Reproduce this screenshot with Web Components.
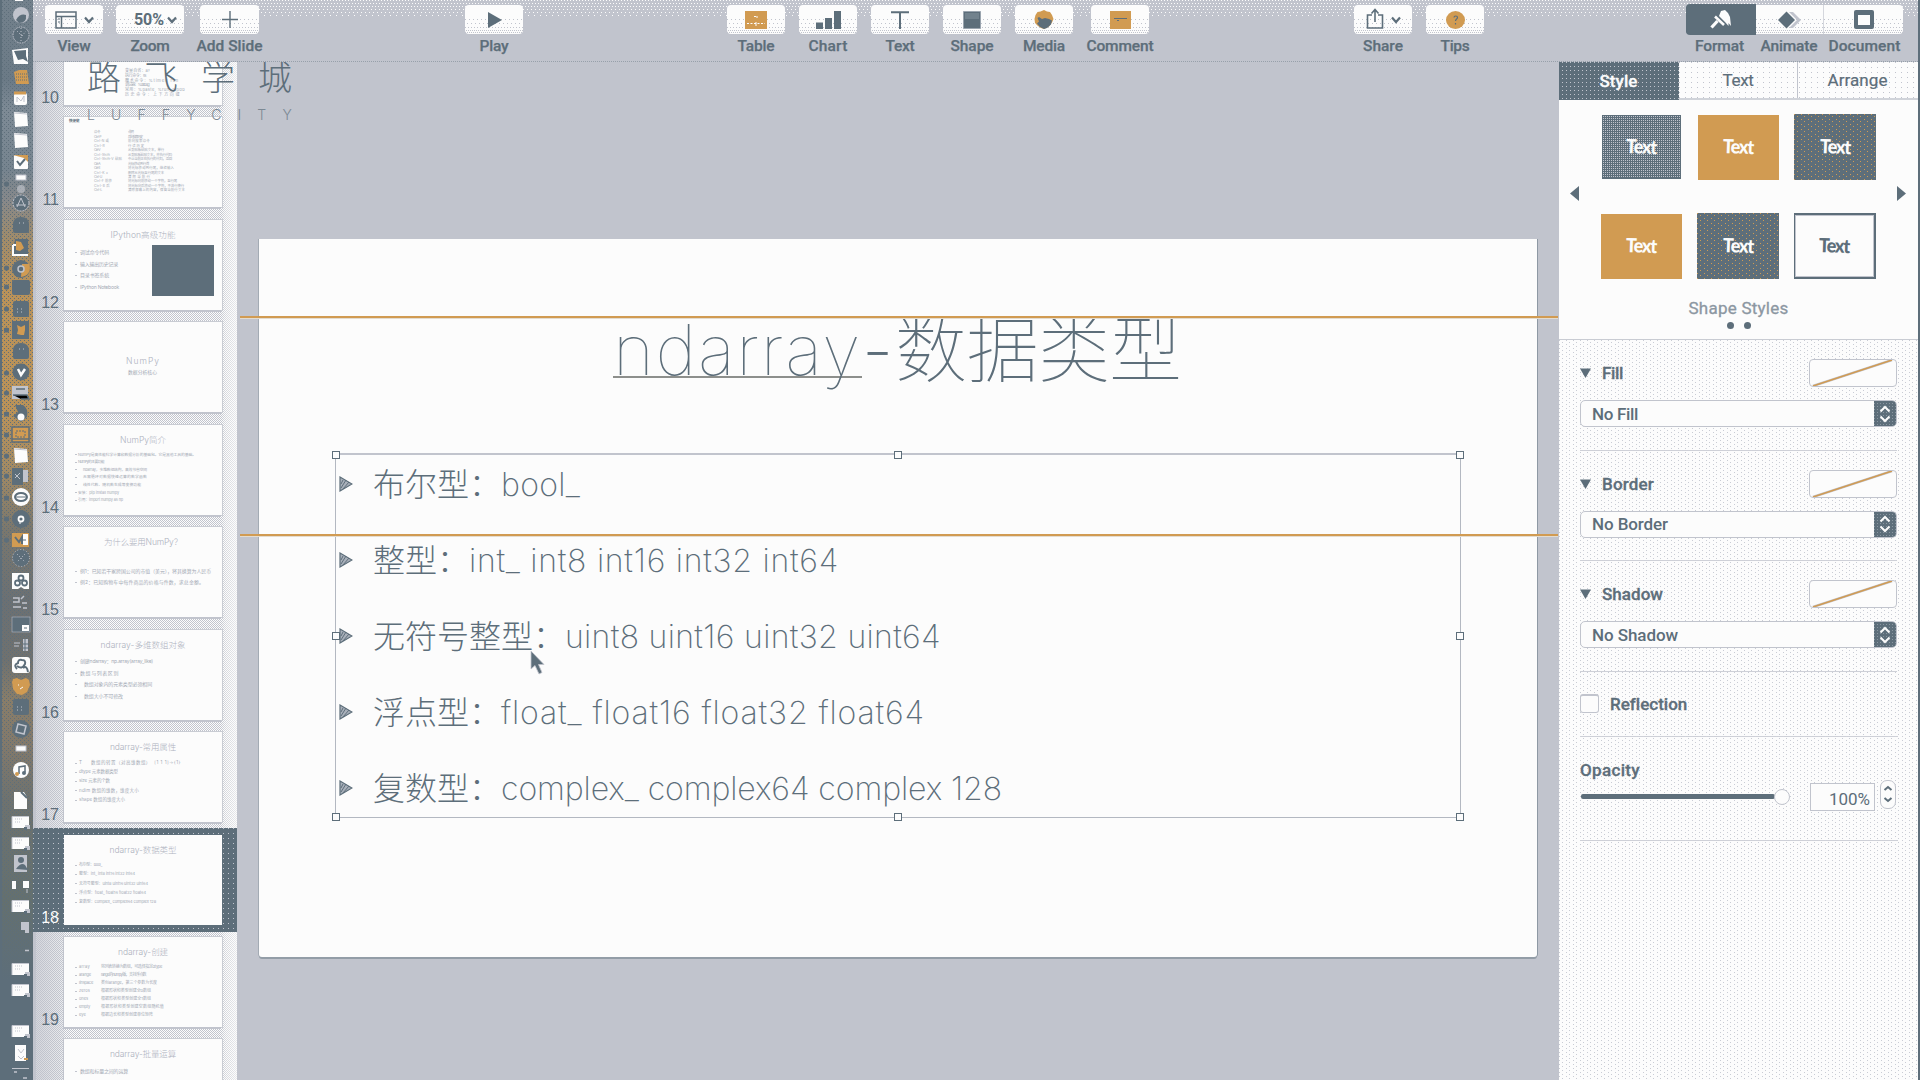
<!DOCTYPE html>
<html lang="zh">
<head>
<meta charset="utf-8">
<title>Keynote</title>
<style>
:root{--w:#fcfcfc;--g:#c1c4cd;--s:#5d6e7a;--o:#d19b52}
html,body{margin:0;height:100%;overflow:hidden}
body{width:1920px;height:1080px;background:var(--g);color:var(--s);font-family:Roboto,"Noto Sans CJK SC",sans-serif}
</style>
</head>
<body>
<keynote-app></keynote-app>
<script>
const define=(name,html,init)=>customElements.define(name,class extends HTMLElement{
  connectedCallback(){
    if(this.shadowRoot)return;
    const r=this.attachShadow({mode:'open'});
    r.innerHTML=typeof html==='function'?html(this):html;
    if(init)init(this,r);
  }
});

// Text tracked so that it fills the width given in its "w" attribute.
define('fit-text','<style>:host{display:inline-block;white-space:pre;flex:none}</style><slot></slot>',el=>{
  const w=parseFloat(el.getAttribute('w'));
  if(!w)return;
  const n=[...el.textContent].length, nat=el.getBoundingClientRect().width;
  el.style.letterSpacing=((w-nat)/n).toFixed(3)+'px';
});

const chev='<svg width="10" height="8" viewBox="0 0 10 8"><path d="M1 1.5L5 6L9 1.5" fill="none" stroke="#5d6e7a" stroke-width="2.2"/></svg>';
const icons={
  view:'<svg width="22" height="18" viewBox="0 0 22 18"><path d="M1 1h20v16H1zM1 5.5h20M6.5 5.5V17" fill="none" stroke="#5d6e7a" stroke-width="1.5"/><path d="M3 8h2M3 11h2" stroke="#5d6e7a"/></svg>'+chev,
  zoom:'<fit-text w="30">50%</fit-text>'+chev,
  add:'<svg width="16" height="17" viewBox="0 0 16 17"><path d="M8 0V17M0 8.5H16" stroke="#5d6e7a" stroke-width="1.4"/></svg>',
  play:'<svg width="15" height="16" viewBox="0 0 15 16"><path d="M1 0L15 8L1 16z" fill="#5d6e7a"/></svg>',
  table:'<svg width="22" height="18" viewBox="0 0 22 18"><path d="M0 0h22v18H0z" fill="#d19b52"/><path d="M9 5.5h3M12 5v3M2 12.5h18" stroke="#fcfcfc" stroke-dasharray="2 1.5"/><path d="M11 11v4" stroke="#fcfcfc"/></svg>',
  chart:'<svg width="25" height="18" viewBox="0 0 25 18"><path d="M0 11.5h7V18H0zM9 7h7v11H9zM18 0h7v18h-7z" fill="#5d6e7a"/></svg>',
  text:'<svg width="18" height="18" viewBox="0 0 18 18"><path d="M0 1.2h18M9 1v17" fill="none" stroke="#5d6e7a" stroke-width="2"/></svg>',
  shape:'<svg width="18" height="18" viewBox="0 0 18 18"><path d="M.5.5h17v17H.5z" fill="#5d6e7a" stroke="#9aa4ae"/><path d="M2 2h14v6H2z" fill="#80909a" opacity=".6"/></svg>',
  media:'<svg width="20" height="19" viewBox="0 0 20 19"><path d="M10 0l3 1.500 3 .500 2 3 1.500 4-1.500 3.500-3 4-3 1.500-2 1-3-1-3-2-3-3-.500-4 1-4 2-3 3-.500z" fill="#d19b52"/><path d="M3.500 8l1.500-1 3 2 3-1 4 1 3 1.500-1 4-4 3.500-3 1-4-2-3-3.500 2-2z" fill="#5d6e7a"/></svg>',
  comment:'<svg width="21" height="18" viewBox="0 0 21 18"><path d="M0 0h21v18H0z" fill="#d19b52"/><path d="M4 7.500h13M7 9.500h2" stroke="#5d6e7a" stroke-width="1.200"/></svg>',
  share:'<svg width="18" height="21" viewBox="0 0 18 21" style="margin-top:-2px"><path d="M6 7H1.500v13h15V7H12M9 14V2M5.500 5.500L9 1.500l3.500 4" fill="none" stroke="#5d6e7a" stroke-width="1.600"/></svg>'+chev,
  tips:'<svg width="19" height="18" viewBox="0 0 19 18"><ellipse cx="9.500" cy="9" rx="9.500" ry="9" fill="#d19b52"/><path d="M8 6.500c0-2 3.500-2 3.500 0c0 1.500-2 1.500-2 3.500M9.500 12v1.500" fill="none" stroke="#5d6e7a" stroke-width="1.200"/></svg>',
  format:'<svg width="22" height="19" viewBox="0 0 22 19"><path d="M11 1L15 0L18 3L20 7L21 16L18.500 13V16L15 12L9 6z" fill="#fcfcfc"/><path d="M5 6.500L14 15" stroke="#fcfcfc" stroke-width="2.600"/><path d="M7.500 11L1.500 17.500" stroke="#fcfcfc" stroke-width="3.200"/></svg>',
  animate:'<svg width="24" height="18" viewBox="0 0 24 18"><path d="M11 1h4l8 8-8 8h-4l8-8z" fill="#c1c4cd"/><path d="M8.500 0.500L17 9l-8.500 8.500L0 9z" fill="#5d6e7a"/></svg>',
  document:'<svg width="20" height="19" viewBox="0 0 20 19"><rect width="20" height="19" rx="2" fill="#5d6e7a"/><path d="M4 5h12v10H4z" fill="#fcfcfc"/></svg>'
};

define('tool-button',el=>`<style>
:host{display:flex;flex-direction:column;align-items:center;width:${el.getAttribute('bw')||58}px;margin-left:${el.getAttribute('ml')||0}px;flex:none}
.b{box-sizing:border-box;width:100%;height:29px;display:flex;align-items:center;justify-content:center;gap:7px;border-radius:4px;font:700 16px Roboto,sans-serif;
 background:conic-gradient(at 1px 1px,transparent 75%,#c1c4cd 0) 0 14px/4px 4px repeat-x,conic-gradient(at 1px 1px,transparent 75%,#c1c4cd 0) 2px 18px/4px 4px repeat-x,conic-gradient(at 1px 1px,transparent 75%,#c1c4cd 0) 0 22px/3px 3px repeat-x,conic-gradient(at 1px 1px,transparent 75%,#c1c4cd 0) 1px 25px/2px 2px repeat-x,conic-gradient(at 1px 1px,transparent 75%,#c1c4cd 0) 0 27px/2px 2px repeat-x,#fcfcfc}
:host([seg]) .b{border-radius:0;border-right:1px solid #d5d7dd}
:host([seg=last]) .b{border-radius:0 4px 4px 0;border-right:0}
:host([seg=on]) .b{background:#5d6e7a;border-radius:4px 0 0 4px;border:0;box-shadow:0 1px #5d6e7a,0 -1px #5d6e7a}
.l{font:500 15.5px/20px Roboto,sans-serif;margin-top:2px;white-space:nowrap;-webkit-text-stroke:.25px #5d6e7a}
svg{display:block;flex:none}
</style><div class="b" style="${el.getAttribute('icon')=='zoom'?'gap:3px;padding-left:11px':''}">${icons[el.getAttribute('icon')]}</div><div class="l" style="margin-left:${2*(el.getAttribute('lx')||0)}px"><fit-text w="${el.getAttribute('lw')}">${el.getAttribute('label')}</fit-text></div>`);

define('app-toolbar',`<style>
:host{display:flex;height:62px;padding:5px 0 0 12px;box-sizing:border-box;width:1885px;border-bottom:1px dotted #97a0aa;
background:conic-gradient(at 1px 1px,transparent 75%,#fcfcfc 0) 0 0/3px 3px repeat-x,conic-gradient(at 1px 1px,transparent 75%,#fcfcfc 0) 1px 3px/3px 3px repeat-x,conic-gradient(at 1px 1px,transparent 75%,#fcfcfc 0) 0 6px/3px 3px repeat-x,conic-gradient(at 1px 1px,transparent 75%,#fcfcfc 0) 2px 9px/4px 3px repeat-x,conic-gradient(at 1px 1px,transparent 75%,#fcfcfc 0) 0 12px/4px 3px repeat-x,conic-gradient(at 1px 1px,transparent 75%,#fcfcfc 0) 3px 15px/6px 3px repeat-x,#c1c4cd}
</style>
<tool-button icon="view" label="View" lw="33"></tool-button>
<tool-button icon="zoom" label="Zoom" lw="39" bw="68" ml="13"></tool-button>
<tool-button icon="add" label="Add Slide" lw="66" bw="59" ml="16"></tool-button>
<tool-button icon="play" label="Play" lw="29" ml="206"></tool-button>
<tool-button icon="table" label="Table" lw="37" ml="204"></tool-button>
<tool-button icon="chart" label="Chart" lw="39" ml="14"></tool-button>
<tool-button icon="text" label="Text" lw="29" ml="14"></tool-button>
<tool-button icon="shape" label="Shape" lw="43" ml="14"></tool-button>
<tool-button icon="media" label="Media" lw="42" ml="14"></tool-button>
<tool-button icon="comment" label="Comment" lw="67" ml="18"></tool-button>
<tool-button icon="share" label="Share" lw="40" ml="205"></tool-button>
<tool-button icon="tips" label="Tips" lw="29" ml="14"></tool-button>
<tool-button icon="format" label="Format" lw="49" bw="70" ml="202" seg="on" lx="-1.5"></tool-button>
<tool-button icon="animate" label="Animate" lw="57" bw="68" seg="mid" lx="-1"></tool-button>
<tool-button icon="document" label="Document" lw="72" bw="79" seg="last" lx="1"></tool-button>`);

// Dock: [kind, y]
const dock=[['ball',15],['compass',35],['face',56],['book',77],['cal',98],['page',119],['page',140],['maps',162],['mini',178],['gear',189],['astore',203],['bubble',225],['photo',247],['chrome',269],['dark',287],['dark2',309],['m',330],['bubble',351],['v',372],['lines',393],['peng',413],['key',434],['page',455],['xl',476],['disc',497],['eye',519],['doc2',540],['globe',558],['clover',581],['bits',602],['dlock',624],['bits2',645],['swirl',665],['orange',686],['dark2',707],['box',729],['mini',749],['music',770],['file',800],['win',822],['win',843],['pic',863],['split',885],['win',906],['dim',927],['win',969],['win',990],['win',1031],['file2',1053]];
const W='#fcfcfc',G='#c1c4cd',S='#5d6e7a',O='#d19b52';
const ic={
 ball:`<circle r="8" fill="${G}"/><path d="M-5 5Q-1-2 5 0Q6 8-2 8z" fill="${S}"/>`,
 compass:`<circle r="8" fill="${S}" stroke="${G}" stroke-dasharray="1.500 1"/><path d="M-4-4L1 1M1 1L5-4M0-7V7" stroke="${G}" stroke-dasharray="1 2"/>`,
 face:`<path d="M-9-6L7-8V8H-7z" fill="${W}"/><path d="M-7-5L5-6V0L7 6L2 3L-3 4z" fill="${S}"/>`,
 book:`<path d="M-7-5L-2-7H6L8 7H-5z" fill="${O}"/><path d="M-5-3H6M-5 0H6M-5 3H6" stroke="${S}" stroke-dasharray="1 1"/>`,
 cal:`<rect x="-7" y="-5" width="13" height="12" rx="2" fill="${W}"/><path d="M-7-5H5" stroke="${O}" stroke-width="3"/><path d="M-4 4V-1L0 3L3-2V4" fill="none" stroke="${G}"/>`,
 page:`<path d="M-7-7L6-6L7 7L-6 8z" fill="${W}"/><path d="M-7-6L6-5" stroke="${G}"/>`,
 maps:`<rect x="-7" y="-7" width="14" height="14" rx="1" fill="${W}"/><path d="M-8-7H7V0L3-4z" fill="${O}"/><path d="M-4-1L-1 3L4-3" stroke="${S}" stroke-width="2" fill="none"/>`,
 mini:`<rect x="-5" y="-3" width="10" height="5" fill="${W}" stroke="${G}"/>`,
 gear:`<circle r="4" fill="${G}" opacity=".65"/>`,
 astore:`<circle r="8" fill="${S}" stroke="${G}" stroke-dasharray="2 1"/><path d="M-4 4L0-5L4 4M-5 2H5" stroke="${G}" fill="none"/>`,
 bubble:`<path d="M-8 0Q-8-8 0-8T8 0V6Q8 8 6 8H-6Q-8 8-8 6z" fill="${S}"/><path d="M-2-2h1M2-2h1" stroke="${G}"/>`,
 photo:`<path d="M-6-8H7V8H-8z" fill="${S}"/><path d="M-8-2H-4M-8-2V8H7" fill="none" stroke="${W}" stroke-width="2"/><path d="M-5-6L0-5L3 1L-1 4L-5 3z" fill="${O}"/>`,
 chrome:`<circle r="9" fill="${S}"/><path d="M0 8A9 9 0 0 0 8-5H1z" fill="${O}"/><circle r="3" fill="${S}" stroke="${G}" stroke-width="1.500"/>`,
 dark:`<rect x="-9" y="-7" width="18" height="15" rx="2" fill="${S}"/>`,
 dark2:`<rect x="-8" y="-8" width="16" height="16" rx="2" fill="${S}"/><path d="M-4 0h8M-4 3h8" stroke="${G}" stroke-dasharray="1 3"/>`,
 m:`<rect x="-9" y="-9" width="17" height="18" fill="${S}"/><path d="M-4-5L0-3L4-5V0L3 5H0L-4 4L-3 0z" fill="${O}"/>`,
 v:`<circle r="8.500" fill="${S}"/><path d="M-3-3L0 3L4-3" fill="none" stroke="${W}" stroke-width="2.500"/>`,
 lines:`<rect x="-9" y="-7" width="16" height="13" fill="${G}"/><path d="M-8 2H6L8 6H0M-5-4H4" stroke="${S}" stroke-width="1.500"/>`,
 peng:`<path d="M-6-8H2Q8-4 6 4L0 9L-8 3L-3-1z" fill="${S}"/><circle cx="0" cy="4" r="3.500" fill="${W}"/>`,
 key:`<rect x="-9" y="-7" width="17" height="15" fill="${O}" stroke="${S}" stroke-width="1.500"/><path d="M-5-3H4V3H-5z" fill="none" stroke="${S}" stroke-dasharray="2 1"/><path d="M-9 5H8" stroke="${S}" stroke-width="1.500"/>`,
 xl:`<path d="M-9-8H2V9H-9z" fill="${S}"/><path d="M2-6H7V6H2" fill="${G}"/><path d="M-6 2L-1-3M-6-2L-1 3" stroke="${G}"/>`,
 disc:`<circle r="9" fill="${W}"/><ellipse rx="6" ry="4" fill="none" stroke="${S}" stroke-width="2"/><path d="M-6 0H6" stroke="${S}"/>`,
 eye:`<circle r="9" fill="${S}"/><circle r="2.500" fill="none" stroke="${W}" stroke-width="1.800"/><path d="M-1 2V5" stroke="${W}"/>`,
 doc2:`<rect x="-9" y="-7" width="17" height="14" fill="${O}"/><path d="M-6-3L-2 2L1-3V4" stroke="${S}" fill="none" stroke-width="2"/><path d="M2-6H7V5H2z" fill="${W}"/><path d="M2 0H5" stroke="${S}"/>`,
 globe:`<circle r="8.500" fill="${S}" stroke="${G}" stroke-dasharray="1 2"/><path d="M-4-4L4 4M4-4L-4 4" stroke="${G}" stroke-dasharray="1 2"/>`,
 clover:`<path d="M-9-8H8V8H3L0 6L-3 8H-9z" fill="${W}"/><g fill="none" stroke="${S}" stroke-width="1.800"><circle cy="-3" r="2.500"/><circle cx="-3.500" cy="2" r="2.500"/><circle cx="3.500" cy="2" r="2.500"/></g>`,
 bits:`<path d="M-8-4H-2V0H-8M0-3L3-6M-8 5H0M1 1h5M2 6h4" stroke="${G}" stroke-width="1.500" fill="none"/>`,
 dlock:`<rect x="-9" y="-7" width="18" height="15" fill="${S}" stroke="${G}" stroke-width=".5"/><rect x="1" y="1" width="7" height="6" fill="${W}"/><path d="M3 4h3" stroke="${S}"/>`,
 bits2:`<path d="M2-6H7V6H2z" fill="${G}"/><path d="M2-1H8M2 3H8M4-6V6" stroke="${S}"/><path d="M-7-2h6M-7 1h5" stroke="${G}"/>`,
 swirl:`<rect x="-9" y="-8" width="18" height="16" rx="3" fill="${W}"/><path d="M-4 4Q-8 0-3-2Q-3-6 1-5Q5-5 4-1Q1 5-4 1M2 3Q6 0 7 7" fill="none" stroke="${S}" stroke-width="2"/>`,
 orange:`<path d="M-9-4L-8-7L-4-8L0-6L5-8L8-6L9-1L6 6L1 9L-4 8L-8 3z" fill="${O}"/><path d="M-3-1h1M-1 3L2 1" stroke="${W}"/>`,
 box:`<circle r="9" fill="${S}"/><path d="M-3-5L5-3L3 5L-5 3z" fill="none" stroke="${G}" stroke-width="1.500"/>`,
 music:`<circle r="8" fill="${W}"/><path d="M-2 4V-3L4-4V2" fill="none" stroke="${S}" stroke-width="1.500"/><circle cx="-4" cy="4" r="2" fill="${O}"/><circle cx="3" cy="3" r="2" fill="${S}"/>`,
 file:`<path d="M-7-8H3L6-3V9H-7z" fill="${W}"/><path d="M0-8L6-2" stroke="${S}" stroke-width="2"/>`,
 win:`<path d="M-9-5H8V6H-9z" fill="${W}"/><path d="M-9 6V-5.500H8" stroke="${G}" fill="none"/><path d="M-6-3H2M-6 0H0" stroke="${G}" stroke-dasharray="1 1"/><path d="M4 3H9V7H4z" fill="${G}"/><path d="M3 5H6V8H3z" fill="${S}"/>`,
 pic:`<rect x="-7" y="-8" width="13" height="17" fill="${G}"/><circle cy="-3" r="3" fill="${S}"/><path d="M-5 6Q0-1 4 2L7 7z" fill="${S}"/>`,
 split:`<path d="M-9-4H-5V4H-9zM2-4H8V3H2z" fill="${W}"/><path d="M6 4V8" stroke="${G}"/>`,
 dim:`<path d="M0-5H8V6H4V3H0z" fill="${G}"/>`,
 file2:`<path d="M-6-8H5V8H-6z" fill="${W}"/><path d="M-3-4L0 0L3-4M-3 3L0 6L3 3" stroke="${G}" fill="none"/><path d="M3 6h4" stroke="${O}" stroke-width="2"/>`
};
define('app-dock',`<style>
:host{display:block;width:33px;height:1080px;flex:none;background:linear-gradient(90deg,#5d6e7a 2px,transparent 2px),
linear-gradient(180deg,#73818c,#6b7a86 80px,#7d8a95 110px,#76848f 170px,#86888a 200px,#a08b69 240px,#b99259 290px,#b99259 410px,#a28a64 470px,#7a776d 530px,#6b7073 600px,#6f716f 660px,#887d69 700px,#82796b 745px,#6e726f 800px,#64706f 900px,#5d6e7a 980px)}
svg{display:block}
</style><svg width="33" height="1080" viewBox="0 0 33 1080">
<defs><pattern id="d" width="4" height="4" patternUnits="userSpaceOnUse"><path d="M0 0h1v1H0zM2 2h1v1H2z" fill="#5d6e7a"/></pattern></defs>
<rect x="2" width="31" height="960" fill="url(#d)"/><path d="M15 0h8" stroke="#fcfcfc" stroke-width="2"/>
${dock.map(([k,y])=>`<g transform="translate(21 ${y})">${ic[k]}</g>`).join('')}
${[184,268,287,309,330,373,393,414,435,456,476,498,519,540].map(y=>`<circle cx="6.500" cy="${y}" r="2.600" fill="${S}"/>`).join('')}
<path d="M12 1068.500H29" stroke="${G}"/><path d="M14 1072h3M23 1078h4M25 950.500h4" stroke="${G}" stroke-width="1.500"/></svg>`);

// Slide thumbnails. Rows: [text, width, x, second column text, width, x]
const thumbs=[
 {n:10,first:56,step:4.8,fs:4,rows:[['变量自省：a?',25,61],['执行命令：!ls',21,61],['魔术命令：%timeit run',54,61],['调试器：%debug',24,61],['常用：%paste, %run, %pdb',60,61],['历史命令：上下方向键',56,61]]},
 {n:11,small:'快捷键',first:15.6,step:4.47,fs:3.4,rows:[['命令',6,30,'说明',5,64],['Ctrl-P',7,30,'后向搜索历史',14,64],['Ctrl-N 或',15,30,'前向搜索命令',22,64],['Ctrl-R',11,30,'行读历史',17,64],['Ctrl-V',6,30,'从剪贴板粘贴文本，单行',36,64],['Ctrl-Shift',16,30,'从剪贴板粘贴文本，并执行代码',44,64],['Ctrl-Shift-V 粘贴',28,30,'中止当前正在执行的代码，返回',44,64],['Ctrl-A',6,30,'光标移动到行首',21,64],['Ctrl-E',6,30,'将光标移动到行尾，继续输入',46,64],['Ctrl-K x',14,30,'删除从光标至行尾的文本',36,64],['Ctrl-U',8,30,'清除当前行',23,64],['Ctrl-F 前移',18,30,'将光标向前移动一个字符，至行尾',49,64],['Ctrl-B 后',16,30,'将光标向后移动一个字符，不进行换行',56,64],['Ctrl-L',8,30,'清除屏幕上的内容，保留当前行文本',57,64]]},
 {n:12,title:'IPython高级功能',tw:65,first:32.7,step:11.5,fs:5,box:1,rows:[['调试命令代码',29,16],['输入输出历史记录',38,16],['目录书签系统',29,16],['IPython Notebook',39,16]]},
 {n:13,title:'NumPy',tw:34,tt:39,first:50,step:5,fs:4.8,rows:[['数据分析核心',29,64]],nb:1},
 {n:14,title:'NumPy简介',tw:46,first:30,step:7.55,fs:3.8,rows:[['NumPy是高性能科学计算和数据分析的基础包。它是其他工具的基础。',118,14],['NumPy的主要功能',26,14],['ndarray，多维数组结构，高效节省空间',64,19],['无需循环对数据快速运算的数学函数',64,19],['线性代数、随机数生成等变换功能',58,19],['安装：pip install numpy',41,14],['引用：import numpy as np',45,14]]},
 {n:15,title:'为什么要用NumPy？',tw:78,first:44,step:11.5,fs:4.9,rows:[['例1：已知若干家跨国公司的市值（美元），将其换算为人民币',131,16],['例2：已知购物车中每件商品的价格与件数，求总金额。',124,16]]},
 {n:16,title:'ndarray-多维数组对象',tw:85,first:32,step:11.5,fs:5,rows:[['创建ndarray：np.array(array_like)',73,16],['数组与列表区别',39,16],['数组对象内的元素类型必须相同',68,20],['数组大小不可修改',39,20]]},
 {n:17,title:'ndarray-常用属性',tw:66,first:31,step:9.3,fs:4.5,rows:[['T',2,15,'数组的转置（对高维数组）  [1 1 1]→{1}',90,27],['dtype 元素数据类型',39,15],['size 元素的个数',31,15],['ndim 数组的维数，维度大小',60,15],['shape 数组的维度大小',46,15]]},
 {n:18,title:'ndarray-数据类型',tw:67,first:30.7,step:9.3,fs:4,sel:1,rows:[['布尔型：bool_',23,15],['整型：int_ int8 int16 int32 int64',56,15],['无符号整型：uint8 uint16 uint32 uint64',69,15],['浮点型：float_ float16 float32 float64',67,15],['复数型：complex_ complex64 complex 128',77,15]]},
 {n:19,title:'ndarray-创建',tw:50,first:30.4,step:7.97,fs:4,rows:[['array',11,15,'将列表转换为数组，可选择指定dtype',61,37],['arange',12,15,'range的numpy版，支持浮点数',45,37],['linspace',14,15,'类似arange，第三个参数为长度',56,37],['zeros',11,15,'根据形状和类型创建全0数组',50,37],['ones',9,15,'根据形状和类型创建全1数组',50,37],['empty',11,15,'根据形状和类型创建空数组随机值',63,37],['eye',7,15,'根据边长和类型创建单位矩阵',52,37]]},
 {n:20,title:'ndarray-批量运算',tw:66,first:32,step:11.5,fs:5,rows:[['数组和标量之间的运算',48,16]]}
];
define('slide-thumb',el=>{const t=thumbs[+el.getAttribute('i')];return `<style>
:host{display:flex;height:102.45px;box-sizing:border-box;padding:7px 0 0 0;flex:none;align-items:flex-start}
:host([sel]){background:conic-gradient(at 1px 1px,transparent 75%,#c1c4cd 0) 0 0/5px 5px,#5d6e7a;color:#fcfcfc;height:104.45px;margin-bottom:-2px}
.n{width:26px;height:93px;display:flex;align-items:flex-end;justify-content:flex-end;font:400 16px/20px "Liberation Sans",sans-serif;box-sizing:border-box}
.t{width:158px;height:90px;margin-left:5px;background:#fcfcfc;box-shadow:-1px 0 #c1c4cd,-1px 2px #c1c4cd,0 0 0 1px #c9ccd3;overflow:hidden;display:grid;flex:none;color:#a3a9b4;font-family:Inter,"Noto Sans CJK SC",sans-serif}
:host([sel]) .t{box-shadow:none}
.t>*{grid-area:1/1}
.h{text-align:center;font-weight:300;font-size:8.5px;line-height:10px;color:#acb1bc}
.r{display:flex;align-items:center;white-space:pre;height:${t.step}px;font-size:${t.fs}px;line-height:1}
.r i{width:2px;height:1px;background:#c1c4cd;margin-left:11px;margin-right:-13px;flex:none}
.pic{width:62px;height:51px;margin:25px 0 0 88px;background:#5d6e7a}
</style><div class="n">${t.n<20?t.n:''}</div><div class="t">
${t.title?`<div class="h" style="margin-top:${(t.tt||15)-5}px"><fit-text w="${t.tw}">${t.title}</fit-text></div>`:''}
${t.small?`<div style="font-size:3.500px;line-height:5px;margin:2px 0 0 5px;font-weight:700;color:#5d6e7a">${t.small}</div>`:''}
<div style="padding-top:${t.first-t.step/2}px">${t.rows.map(r=>`<div class="r">${t.nb||t.n<12?'':`<i></i>`}<fit-text w="${r[1]}" style="margin-left:${r[2]}px">${r[0]}</fit-text>${r[3]?`<fit-text w="${r[4]}" style="margin-left:${r[5]-r[2]-r[1]}px">${r[3]}</fit-text>`:''}</div>`).join('')}</div>
${t.box?'<div class="pic"></div>':''}</div>`});

define('slide-navigator',`<style>
:host{display:block;width:204px;height:1018px;overflow:hidden;flex:none;
background:linear-gradient(90deg,#c1c4cd 3px,transparent 3px),linear-gradient(90deg,#c1c4cdb0 3px,#c1c4cd40 31px,transparent 32px,transparent 188px,#fcfcfc55 192px,#fcfcfcaa),repeating-conic-gradient(#c1c4cd 0 25%,#fcfcfc 0 50%) 0 0/2px 2px}
.l{display:flex;flex-direction:column;margin-top:-54px}
</style><div class="l">${thumbs.map((t,i)=>`<slide-thumb i="${i}"${t.sel?' sel':''}></slide-thumb>`).join('')}</div>`);

define('bullet-line',el=>`<style>
:host{display:flex;align-items:center;height:76px;font:200 32px/40px Inter,"Noto Sans CJK SC",sans-serif}
svg{margin-right:20px;flex:none}
.c{font-family:"Noto Sans CJK SC";font-weight:300;margin-top:-4px}
.e{margin-top:2px}
</style><svg width="14" height="16" viewBox="0 0 14 16"><path d="M1 1v14L13 8z" fill="#a9b0ba" stroke="#5d6e7a" stroke-width="1.200"/><path d="M2 12L7 4M4 13L10 6M2 8L4 4" stroke="#5d6e7a"/></svg><fit-text class="c" w="${el.getAttribute('cw')}">${el.getAttribute('zh')}</fit-text><fit-text class="e" w="${el.getAttribute('lw')}">${el.getAttribute('en')}</fit-text>`);

define('slide-canvas',`<style>
:host{display:block;position:relative;width:1322px;height:1018px;flex:none;background:#c1c4cd;overflow:hidden}
.slide{margin:177px 0 0 22px;width:1278px;height:718px;background:#fcfcfc;border-radius:0 0 3px 3px;box-shadow:-1px 0 #a3abb4,1px 0 #8e99a4,0 2px #939da7;box-sizing:border-box;padding:64px 77px 0 76px;display:flex;flex-direction:column}
.title{display:flex;align-items:flex-end;justify-content:center;height:94px;font:100 70px/94px Inter,"Noto Sans CJK SC",sans-serif;white-space:nowrap;margin-left:-1px}
.title .u{text-decoration:underline;text-decoration-thickness:2px;text-underline-offset:1px;text-decoration-skip-ink:none;text-decoration-color:#8d8f8c}
.title .d{font-weight:200}
.title .c{font:100 72px/94px "Noto Sans CJK SC",sans-serif;margin-bottom:5px}
.body{position:relative;box-sizing:border-box;width:1126px;height:365px;margin-top:56px;border:1px solid #b3b8c1;border-top:2px solid #c1c4cd;padding-left:3px;display:flex;flex-direction:column;flex:none}
.lines{margin-top:-9px}
.k{position:absolute;width:8px;height:8px;box-sizing:border-box;border:1.500px solid #5d6e7a;background:#fcfcfc;margin:-4px}
.guide{position:absolute;left:3px;width:1318px;height:2px;background:#d19b52;box-shadow:0 1px #e4dccf}
.cur{position:absolute;left:293px;top:589px}
</style>
<div class="slide"><div class="title"><fit-text class="u" w="249">ndarray</fit-text><fit-text class="d" w="33">-</fit-text><fit-text class="c" w="286">数据类型</fit-text></div>
<div class="body"><div class="lines">
<bullet-line cw="128" zh="布尔型：" en="bool_" lw="79"></bullet-line>
<bullet-line cw="96" zh="整型：" en="int_ int8 int16 int32 int64" lw="370"></bullet-line>
<bullet-line cw="192" zh="无符号整型：" en="uint8 uint16 uint32 uint64" lw="376"></bullet-line>
<bullet-line cw="128" zh="浮点型：" en="float_ float16 float32 float64" lw="424"></bullet-line>
<bullet-line cw="128" zh="复数型：" en="complex_ complex64 complex 128" lw="501"></bullet-line></div>
${[0,50,100].map(x=>[0,50,100].map(y=>x==50&&y==50?'':`<span class="k" style="left:${x}%;top:${y}%"></span>`).join('')).join('')}
</div></div>
<div class="guide" style="top:253.500px"></div><div class="guide" style="top:471.500px"></div>
<svg class="cur" width="15" height="24" viewBox="0 0 15 24"><path d="M1 0V18L5 14.500L9 23L12 21.500L8.500 13.500H14z" fill="#5d6e7a" stroke="#c1c4cd" stroke-width=".8"/></svg>`);

define('shape-swatch',el=>`<style>
:host{display:flex;align-items:center;justify-content:center;box-sizing:border-box;color:#fcfcfc;font:900 18px/20px Lato,sans-serif;flex:none}
:host([k=a]){width:79px;height:64px;background:conic-gradient(at 1px 1px,transparent 75%,#c1c4cd 0) 0 0/2px 2px,#5d6e7a;border:1px solid #5d6e7a}
:host([k=o]){width:81px;height:65px;background:#d19b52}
:host([k=d]){width:82px;height:66px;background:conic-gradient(at 1px 1px,transparent 75%,#d19b52 0) 0 0/7px 5px,conic-gradient(at 1px 1px,transparent 75%,#d19b52 0) 3px 2px/7px 5px,#5d6e7a}
:host([k=w]){width:82px;height:66px;border:2px solid #5d6e7a;border-left-width:1px;background:#fcfcfc;color:#5d6e7a;box-shadow:inset 0 0 0 1px #c1c4cd}
</style><fit-text w="31" style="transform:translateY(-1px) scaleY(1.080) rotate(2deg)">Text</fit-text>`);

define('style-section',el=>`<style>
:host{display:block;box-sizing:border-box;height:110.500px;padding-top:19px;border-bottom:1px solid #ced0d7;margin:0 21px 0 21px}
.r{display:flex;align-items:center;height:28px}
.r svg{flex:none}
b{font:500 17px/20px Roboto,sans-serif;-webkit-text-stroke:.3px #5d6e7a;margin-left:11px;flex:1}
.sw{width:88px;height:28px;box-sizing:border-box;border:1px solid #c1c4cd;border-radius:4px;background:#fcfcfc}
.s{margin-top:13px;height:27px;width:317px;box-sizing:border-box;border:1px solid #c1c4cd;border-radius:5px;background:#fcfcfc;display:flex;align-items:center;justify-content:space-between;padding-left:11px;font:500 17px/20px Roboto,sans-serif;overflow:hidden}
.k{width:22px;height:27px;display:flex;align-items:center;justify-content:center;background:conic-gradient(at 1px 1px,transparent 75%,#8a97a1 0) 0 0/3px 3px,#5d6e7a}
</style><div class="r"><svg width="11" height="10" viewBox="0 0 11 10"><path d="M0 .5H11L5.500 10z" fill="#5d6e7a"/></svg><b><fit-text w="${el.getAttribute('tw')}">${el.getAttribute('t')}</fit-text></b><div class="sw"><svg width="86" height="26" viewBox="0 0 86 26"><path d="M3 26L82 0" stroke="#c1c4cd" stroke-width="2.400"/><path d="M3 26L82 0" stroke="#d19b52" stroke-width="1.500"/></svg></div></div>
<div class="s"><fit-text w="${el.getAttribute('sw')}">No ${el.getAttribute('t')}</fit-text><span class="k"><svg width="12" height="18" viewBox="0 0 12 18"><path d="M1.500 6.500L6 2L10.500 6.500M1.500 11.500L6 16L10.500 11.500" fill="none" stroke="#fcfcfc" stroke-width="2"/></svg></span></div>`);

define('format-panel',`<style>
:host{display:flex;flex-direction:column;width:359px;height:1018px;background:#fcfcfc;flex:none;font-family:Roboto,sans-serif}
.tabs{display:flex;height:38px;box-sizing:border-box;flex:none;font:400 17px/20px Roboto,sans-serif;border-bottom:2px solid #d0d3d9;background:conic-gradient(at 1px 1px,transparent 75%,#c1c4cd 0) 0 0/6px 5px,#fcfcfc}
.tabs div{display:flex;align-items:center;justify-content:center;width:119px;box-sizing:border-box;-webkit-text-stroke:.2px #5d6e7a}
.tabs .on{width:121px;height:38px;margin-left:-1px;background:conic-gradient(at 1px 1px,transparent 75%,#c1c4cd 0) 0 0/4px 4px,#5d6e7a;color:#fcfcfc;-webkit-text-stroke:.3px #fcfcfc;font-weight:500}
.tabs .m{border-right:1px solid #c1c4cd}
.sh{height:240px;flex:none;box-sizing:border-box;display:flex;flex-direction:column;align-items:center;border-bottom:1px solid #c9ccd3}
.g{display:flex;align-items:center;width:336px;height:165px;margin-top:14px;margin-left:-1px;justify-content:space-between}
.g>svg{margin-top:-7px}
.cells{display:grid;grid-template-columns:82px 82px 82px;column-gap:15px;row-gap:33px;justify-items:center;align-items:center}
.ss{font:400 17px/20px Roboto,sans-serif;color:#8c97a2;margin-top:19px;-webkit-text-stroke:.3px #8c97a2}
.dots{display:flex;gap:10px;margin-top:4px}.dots i{width:7px;height:7px;border-radius:50%;background:#5d6e7a}
.rest{flex:1;background:conic-gradient(at 1px 1px,transparent 75%,#c9ccd4 0) 0 0/7px 4px,conic-gradient(at 1px 1px,transparent 75%,#c9ccd4 0) 3px 2px/7px 4px,#fcfcfc}
.b{font:500 17px/20px Roboto,sans-serif;-webkit-text-stroke:.3px #5d6e7a}
.refl{height:65px;box-sizing:border-box;margin:0 20px 0 21px;border-bottom:1px solid #ced0d7;display:flex;align-items:center;gap:11px}
.refl i{width:19px;height:19px;box-sizing:border-box;border:1px solid #c1c4cd;border-top-width:2px;border-radius:3px;background:#fcfcfc}
.op{height:104px;box-sizing:border-box;margin:0 20px 0 21px;border-bottom:1px solid #ced0d7;padding-top:23px}
.row{display:flex;align-items:center;margin-top:3px;height:28px}
.tr{width:194px;height:5px;background:#5d6e7a;border-radius:2px;margin-left:1px}
.kn{width:16px;height:16px;border:1px solid #c1c4cd;border-radius:50%;background:#fcfcfc;box-sizing:border-box;margin-left:-1px}
.v{width:65px;height:28px;box-sizing:border-box;border:1px solid #c1c4cd;background:#fcfcfc;margin-left:20px;display:flex;align-items:center;justify-content:flex-end;padding:4px 4px 0 0;font:400 17px/20px Roboto,sans-serif}
.st{width:16px;height:29px;border:1px solid #c1c4cd;border-radius:7px;box-sizing:border-box;margin:-5px 0 0 5px;background:#fcfcfc;display:flex;align-items:center;justify-content:center}
</style>
<div class="tabs"><div class="on"><fit-text w="38">Style</fit-text></div><div class="m"><fit-text w="31">Text</fit-text></div><div><fit-text w="60">Arrange</fit-text></div></div>
<div class="sh"><div class="g"><svg width="9" height="15" viewBox="0 0 9 15"><path d="M9 0V15L0 7.500z" fill="#5d6e7a"/></svg>
<div class="cells"><shape-swatch k="a"></shape-swatch><shape-swatch k="o"></shape-swatch><shape-swatch k="d"></shape-swatch><shape-swatch k="o"></shape-swatch><shape-swatch k="d"></shape-swatch><shape-swatch k="w"></shape-swatch></div>
<svg width="9" height="15" viewBox="0 0 9 15"><path d="M0 0V15L9 7.500z" fill="#5d6e7a"/></svg></div>
<div class="ss"><fit-text w="100">Shape Styles</fit-text></div><div class="dots"><i></i><i></i></div></div>
<div class="rest"><style-section t="Fill" tw="21" sw="46"></style-section><style-section t="Border" tw="52" sw="76"></style-section><style-section t="Shadow" tw="61" sw="86"></style-section>
<div class="refl"><i></i><span class="b"><fit-text w="77">Reflection</fit-text></span></div>
<div class="op"><span class="b"><fit-text w="60">Opacity</fit-text></span><div class="row"><div class="tr"></div><div class="kn"></div><div class="v"><fit-text w="41">100%</fit-text></div><div class="st"><svg width="10" height="18" viewBox="0 0 10 18"><path d="M1.500 5L5 2L8.500 5M1.500 13L5 16L8.500 13" fill="none" stroke="#5d6e7a" stroke-width="2"/></svg></div></div></div></div>`);

define('city-watermark',`<style>
:host{position:absolute;left:87px;top:62px;height:60px;overflow:hidden;pointer-events:none;width:232px}
.z{font:300 34px/34px "Noto Sans CJK SC",sans-serif;margin-top:-3px}
.e{font:300 14px/16px Inter,sans-serif;margin-top:14px;color:#7c8994}
</style><div class="z"><fit-text w="228">路飞学城</fit-text></div><div class="e"><fit-text w="221">LUFFYCITY</fit-text></div>`);

define('keynote-app',`<style>
:host{display:flex;width:1920px;height:1080px;overflow:hidden;position:relative}
.win{display:flex;flex-direction:column;width:1885px}
.main{display:flex;width:1885px}
.edge{width:2px;background:#5d6e7a}
</style><app-dock></app-dock><div class="win"><app-toolbar></app-toolbar><div class="main"><slide-navigator></slide-navigator><slide-canvas></slide-canvas><format-panel></format-panel></div></div><div class="edge"></div><city-watermark></city-watermark>`);
</script>
</body>
</html>
